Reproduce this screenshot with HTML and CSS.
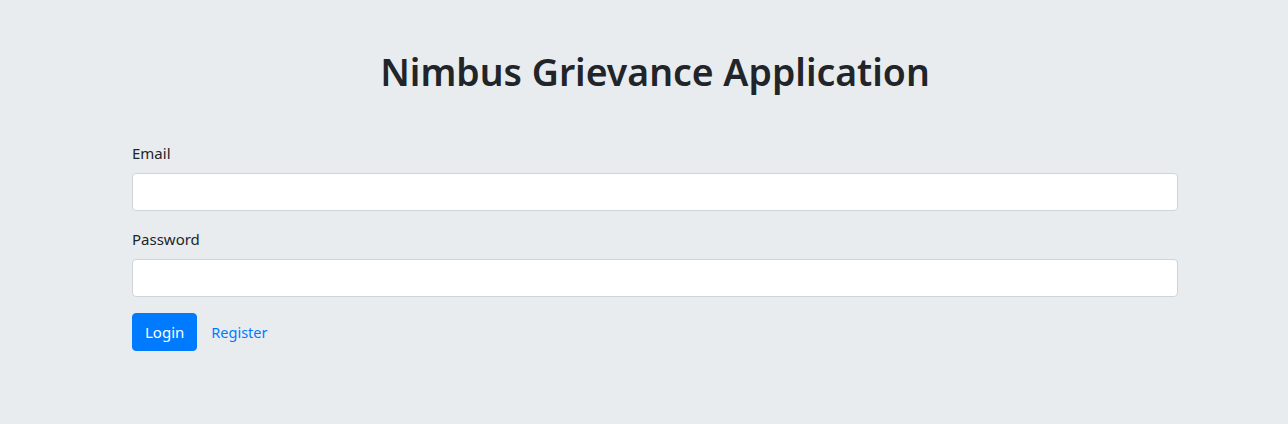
FILE: index.html
```html
<!DOCTYPE html>
<html lang="en">
<head>
<meta charset="utf-8">
<title>Nimbus Grievance Application</title>
<link rel="stylesheet" href="styles.css">
</head>
<body>
<main class="page">
  <h1 class="title">Nimbus Grievance Application</h1>
  <form class="form">
    <div class="form-group">
      <label class="label" for="email">Email</label>
      <input class="input" id="email" type="email">
    </div>
    <div class="form-group">
      <label class="label" for="password">Password</label>
      <input class="input" id="password" type="password">
    </div>
    <div class="actions">
      <button class="btn btn-primary" type="button">Login</button>
      <a class="btn btn-link" href="#">Register</a>
    </div>
  </form>
</main>
</body>
</html>
```
FILE: styles.css
```css
html, body {
  margin: 0;
  padding: 0;
  background: #e9ecef;
  height: 100%;
}
body {
  font-family: "Noto Sans", "Open Sans", sans-serif;
  font-size: 16px;
  line-height: 1.5;
  color: #212529;
}
.page {
  padding: 48px 110px 0 132px;
}
.title {
  margin: 0 0 45px;
  font-size: 37.4px;
  font-weight: 600;
  line-height: 48px;
  text-align: center;
}
.form-group {
  margin-bottom: 16px;
}
.label {
  display: block;
  margin-bottom: 8px;
  font-size: 15px;
  line-height: 24px;
}
.input {
  display: block;
  box-sizing: border-box;
  width: 100%;
  height: 38px;
  padding: 6px 12px;
  font: inherit;
  background: #fff;
  border: 1px solid #ced4da;
  border-radius: 4px;
}
.actions {
  display: flex;
  gap: 1px;
}
.btn {
  box-sizing: border-box;
  height: 38px;
  padding: 6px 12px;
  font: inherit;
  font-size: 15px;
  line-height: 24px;
  border: 1px solid transparent;
  border-radius: 4px;
  text-decoration: none;
}
.btn-primary {
  background: #007bff;
  border-color: #007bff;
  color: #fff;
}
.btn-link {
  color: #007bff;
  background: transparent;
  font-size: 14.5px;
}
```
